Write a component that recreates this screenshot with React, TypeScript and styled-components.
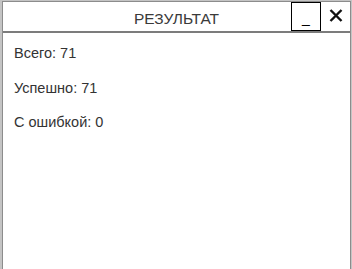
import { FC } from "react";
import styled, { createGlobalStyle } from "styled-components";

const Global = createGlobalStyle`
  html, body {
    margin: 0;
    padding: 0;
    height: 100%;
    background: #c4c4c4;
    overflow: hidden;
  }
  body {
    font-family: "Liberation Sans", Arial, sans-serif;
  }
`;

const Window = styled.section`
  box-sizing: border-box;
  margin: 1px 0 0 2px;
  width: 349px;
  height: calc(100vh - 1px);
  background: #fff;
  border: 1px solid #8c8c8c;
  border-bottom: none;
  display: flex;
  flex-direction: column;
`;

const Header = styled.header`
  display: grid;
  grid-template-columns: 59px 1fr 59px;
  align-items: stretch;
  height: 29px;
  border-bottom: 2px solid #7c7c7c;
`;

const Title = styled.h1`
  grid-column: 2;
  margin: 0;
  font-size: 15.5px;
  font-weight: normal;
  color: #3a3a3a;
  text-align: center;
  line-height: 33px;
`;

const Controls = styled.div`
  grid-column: 3;
  display: flex;
`;

const MinButton = styled.button`
  width: 30px;
  height: 29px;
  margin: 0;
  padding: 0 0 4px;
  border: 1px solid #000;
  background: #fff;
  font: 14px "Liberation Sans", Arial, sans-serif;
  color: #000;
  display: flex;
  align-items: flex-end;
  justify-content: center;
  cursor: pointer;
`;

const CloseButton = styled.button`
  flex: 1;
  height: 29px;
  margin: 0;
  padding: 0 0 2px;
  border: none;
  background: transparent;
  display: flex;
  align-items: center;
  justify-content: center;
  cursor: pointer;
`;

const Body = styled.div`
  display: flex;
  flex-direction: column;
  gap: 18.5px;
  padding: 12px 11px;
`;

const Line = styled.p`
  margin: 0;
  font-size: 14.5px;
  line-height: 16px;
  color: #333;
`;

const stats = [
  { label: "Всего", value: 71 },
  { label: "Успешно", value: 71 },
  { label: "С ошибкой", value: 0 },
];

const App: FC = () => {
  return (
    <>
      <Global />
      <Window>
        <Header>
          <Title>РЕЗУЛЬТАТ</Title>
          <Controls>
            <MinButton>_</MinButton>
            <CloseButton aria-label="close">
              <svg width="14" height="13" viewBox="0 0 14 13">
                <path
                  d="M1.5 1 L12.5 12 M12.5 1 L1.5 12"
                  stroke="#111"
                  strokeWidth="2.4"
                  strokeLinecap="butt"
                />
              </svg>
            </CloseButton>
          </Controls>
        </Header>
        <Body>
          {stats.map((s) => (
            <Line key={s.label}>
              {s.label}: {s.value}
            </Line>
          ))}
        </Body>
      </Window>
    </>
  );
};

export default App;
